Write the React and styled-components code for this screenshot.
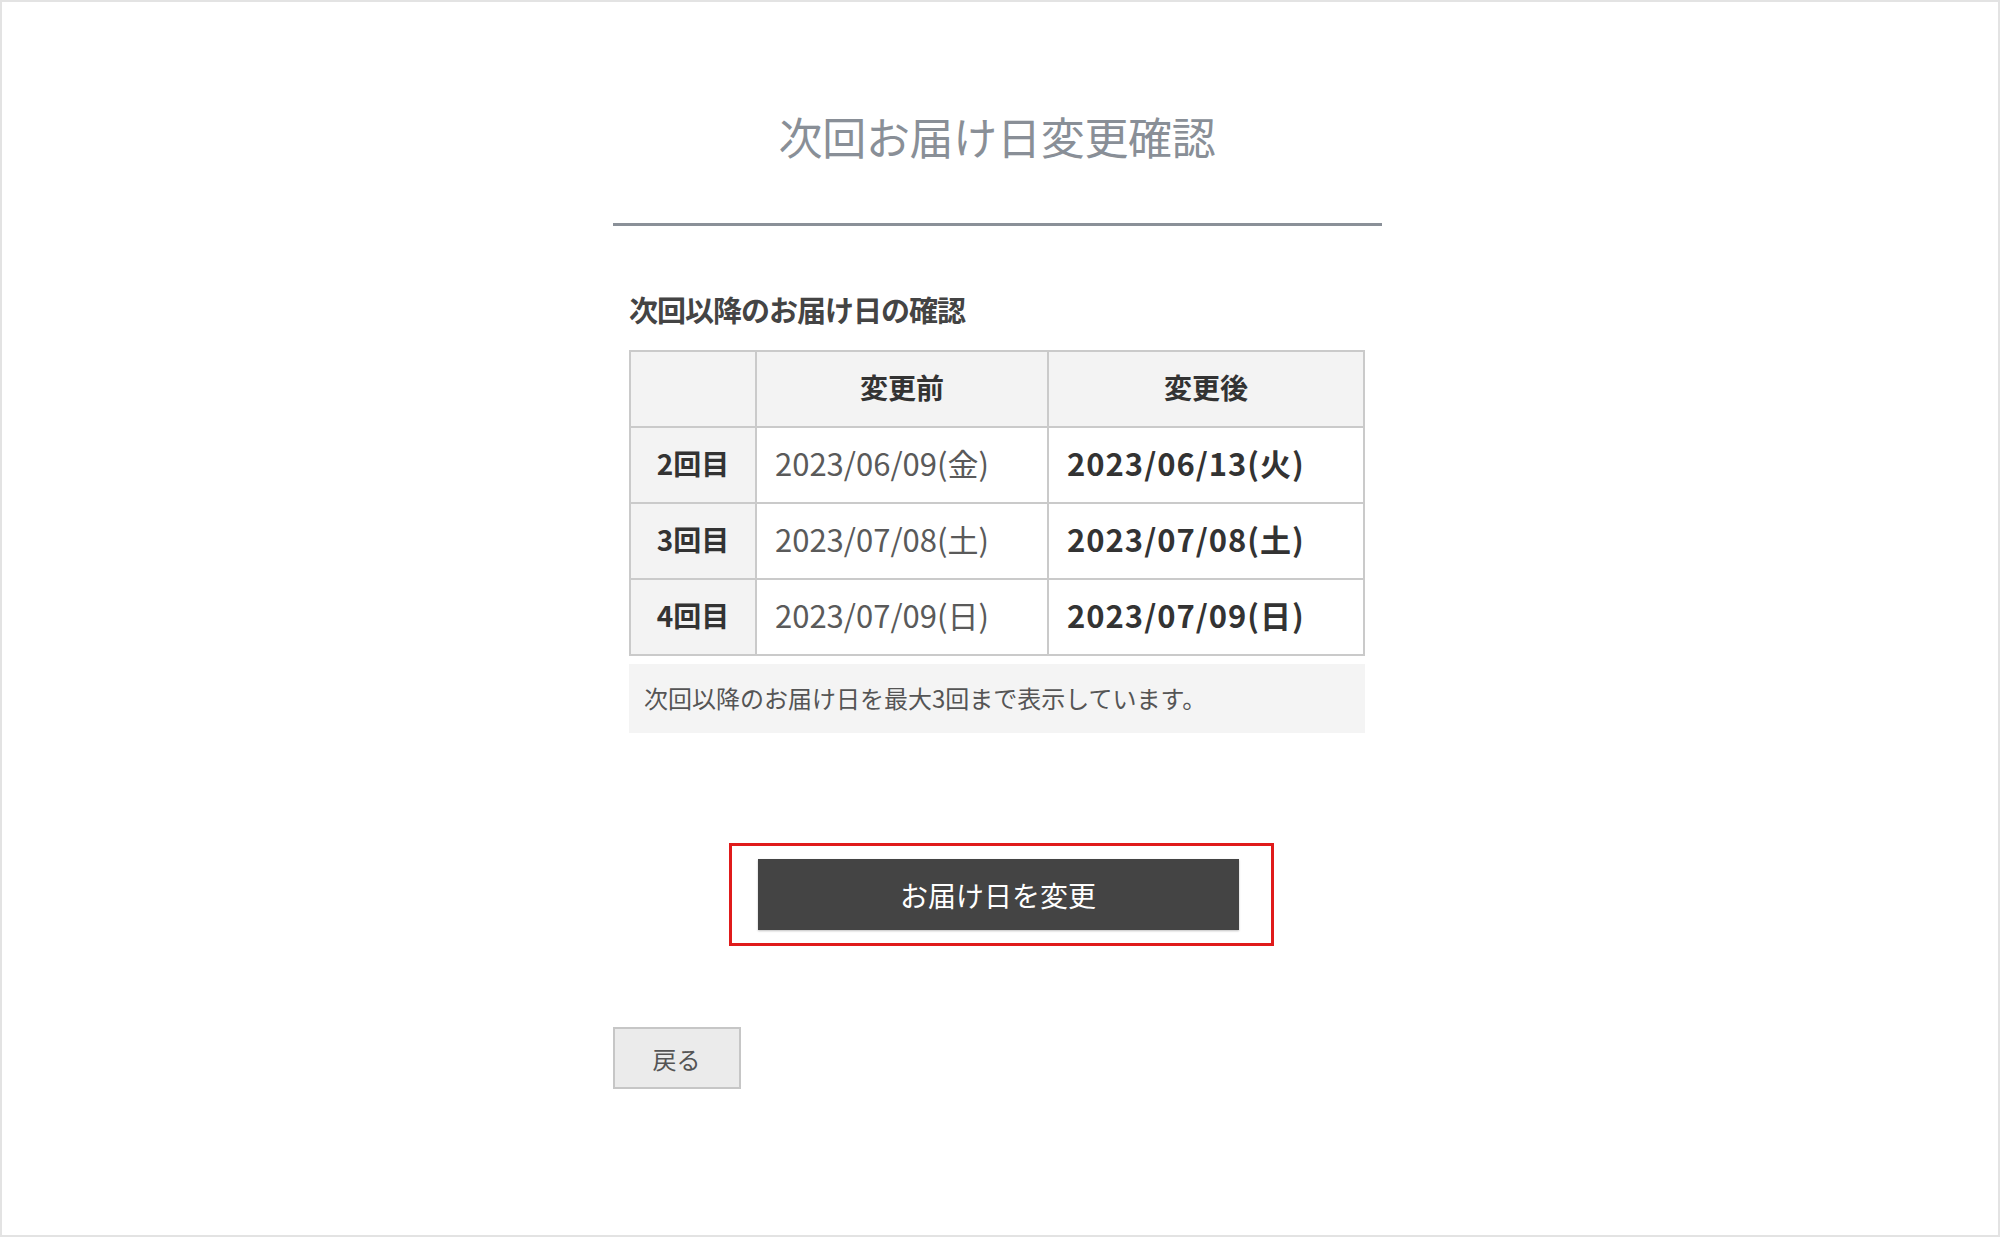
import React from 'react';
import styled, { createGlobalStyle } from 'styled-components';

const GlobalStyle = createGlobalStyle`
  html, body {
    margin: 0;
    padding: 0;
    background: #fff;
  }
  body {
    font-family: "Noto Sans CJK JP", "Noto Sans", sans-serif;
    color: #444;
  }
`;

const Frame = styled.div`
  box-sizing: border-box;
  width: 2000px;
  height: 1237px;
  border: 2px solid #e3e3e3;
  background: #fff;
  overflow: hidden;
`;

const Content = styled.div`
  width: 769px;
  margin: 0 auto;
  transform: translateX(-3px);
`;

const Title = styled.h1`
  margin: 104px 0 0;
  padding-bottom: 57px;
  border-bottom: 3px solid #8a9098;
  text-align: center;
  font-size: 44px;
  line-height: 60px;
  font-weight: 400;
  color: #898f97;
  letter-spacing: -0.3px;
`;

const Section = styled.section`
  width: 736px;
  margin: 0 auto;
`;

const SubTitle = styled.h2`
  margin: 65px 0 23px;
  font-size: 29px;
  line-height: 36px;
  font-weight: 700;
  color: #444;
  letter-spacing: -1px;
`;

const Table = styled.table`
  width: 100%;
  border-collapse: collapse;
  border: 2px solid #cacaca;
  table-layout: fixed;
`;

const Cell = styled.td`
  height: 70px;
  padding: 0 18px 4px;
  border: 2px solid #cacaca;
  font-size: ${p => (p.$date ? '31px' : '28px')};
  line-height: 40px;
  letter-spacing: ${p => (p.$date && p.$bold ? '1px' : '0')};
  text-align: ${p => (p.$center ? 'center' : 'left')};
  font-weight: ${p => (p.$bold ? 700 : 400)};
  color: ${p => (p.$bold ? '#333' : '#5a5a5a')};
  background: ${p => (p.$shade ? '#f3f3f3' : '#fff')};
  white-space: nowrap;
`;

const Note = styled.p`
  box-sizing: border-box;
  display: flex;
  align-items: center;
  height: 69px;
  margin: 8px 0 0;
  padding: 0 15px 2px;
  background: #f4f4f4;
  font-size: 24px;
  color: #555;
`;

const ActionRow = styled.div`
  display: flex;
  justify-content: center;
  margin-top: 110px;
  padding-left: 8px;
`;

const Highlight = styled.div`
  border: 3px solid #e01b1b;
  padding: 13px 32px 13px 26px;
`;

const PrimaryButton = styled.button`
  display: block;
  width: 481px;
  height: 71px;
  border: none;
  background: #444;
  color: #fff;
  font-family: inherit;
  font-size: 28px;
  box-shadow: 0 1px 2px rgba(0, 0, 0, 0.25);
  cursor: pointer;
`;

const BackButton = styled.button`
  display: block;
  box-sizing: border-box;
  width: 128px;
  height: 62px;
  margin-top: 81px;
  border: 2px solid #c6c6c6;
  background: #ebebeb;
  color: #555;
  font-family: inherit;
  font-size: 24px;
  cursor: pointer;
`;

const rows = [
  { n: '2回目', before: '2023/06/09(金)', after: '2023/06/13(火)' },
  { n: '3回目', before: '2023/07/08(土)', after: '2023/07/08(土)' },
  { n: '4回目', before: '2023/07/09(日)', after: '2023/07/09(日)' },
];

export default function App() {
  return (
    <>
      <GlobalStyle />
      <Frame>
        <Content>
          <Title>次回お届け日変更確認</Title>
          <Section>
            <SubTitle>次回以降のお届け日の確認</SubTitle>
            <Table>
              <colgroup>
                <col style={{ width: '126px' }} />
                <col style={{ width: '292px' }} />
                <col />
              </colgroup>
              <thead>
                <tr>
                  <Cell as="th" $shade />
                  <Cell as="th" $shade $center $bold>変更前</Cell>
                  <Cell as="th" $shade $center $bold>変更後</Cell>
                </tr>
              </thead>
              <tbody>
                {rows.map(r => (
                  <tr key={r.n}>
                    <Cell as="th" $shade $center $bold>{r.n}</Cell>
                    <Cell $date>{r.before}</Cell>
                    <Cell $date $bold>{r.after}</Cell>
                  </tr>
                ))}
              </tbody>
            </Table>
            <Note>次回以降のお届け日を最大3回まで表示しています。</Note>
          </Section>
          <ActionRow>
            <Highlight>
              <PrimaryButton>お届け日を変更</PrimaryButton>
            </Highlight>
          </ActionRow>
          <BackButton>戻る</BackButton>
        </Content>
      </Frame>
    </>
  );
}
